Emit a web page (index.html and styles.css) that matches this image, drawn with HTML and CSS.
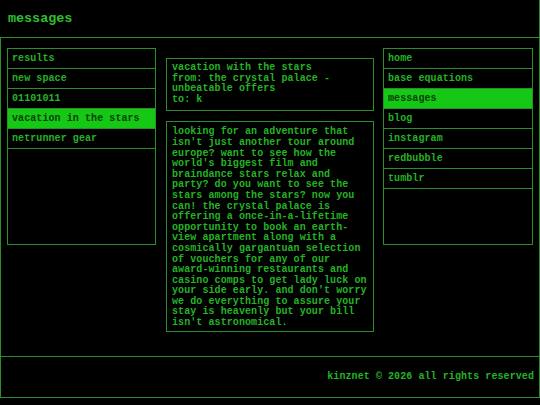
FILE: index.html
```html
<!DOCTYPE html>
<html lang="en">

<head>
    <meta charset="UTF-8">
    <meta name="viewport" content="width=device-width, initial-scale=1.0">
    <title>messages</title>
    <link rel="stylesheet" href="styles.css">
</head>

<body>
    <div class="header">messages</div>
    <div class="page">
        <div class="main">
            <div class="side">
                <a class="item" href="#">results</a>
                <a class="item" href="#">new space</a>
                <a class="item" href="#">01101011</a>
                <a class="item active" href="#">vacation in the stars</a>
                <a class="item" href="#">netrunner gear</a>
            </div>
            <div class="middle">
                <div class="box msg-head">
                    vacation with the stars
                    <br>from: the crystal palace - unbeatable offers
                    <br>to: k
                </div>
                <div class="box msg-body">
                    looking for an adventure that isn't just another tour around europe? want to see how the
                    world's biggest film and braindance stars relax and party? do you want to see the stars
                    among the stars? now you can! the crystal palace is offering a once-in-a-lifetime
                    opportunity to book an earth-view apartment along with a cosmically gargantuan selection
                    of vouchers for any of our award-winning restaurants and casino comps to get lady luck on
                    your side early. and don't worry we do everything to assure your stay is heavenly but your
                    bill isn't astronomical.
                </div>
            </div>
            <div class="side nav">
                <a class="item" href="#">home</a>
                <a class="item" href="#">base equations</a>
                <a class="item active" href="#">messages</a>
                <a class="item" href="#">blog</a>
                <a class="item" href="#">instagram</a>
                <a class="item" href="#">redbubble</a>
                <a class="item" href="#">tumblr</a>
            </div>
        </div>
        <footer>kinznet &copy; 2026 all rights reserved</footer>
    </div>
</body>

</html>
```

FILE: styles.css
```css
body {
    font-family: "Liberation Mono", "DejaVu Sans Mono", monospace;
    font-weight: bold;
    font-size: 10px;
    background-color: #000000;
    color: #25b325;
    margin: 0;
    padding: 0;
}

.header {
    height: 37px;
    line-height: 37px;
    padding-left: 8px;
    font-size: 13.4px;
    color: #2fbf2f;
    border-bottom: 1px solid #2a8f2a;
    border-right: 1px solid #2a8f2a;
}

.page {
    border: 1px solid #2a8f2a;
    border-top: none;
}

.main {
    display: grid;
    grid-template-columns: 149px 208px 149px;
    column-gap: 10px;
    align-items: start;
    height: 308px;
    padding: 10px 0 0 6px;
}

.side {
    height: 195px;
    border: 1px solid #2a8f2a;
    display: flex;
    flex-direction: column;
}

.nav {
    margin-left: -1px; /* right menu sits one pixel closer */
}

.item {
    display: block;
    height: 19px;
    line-height: 19px;
    padding-left: 4px;
    color: #25b325;
    text-decoration: none;
    letter-spacing: 0.08px;
    border-bottom: 1px solid #2a8f2a;
}

.item.active {
    background-color: #16c816;
    color: #064006;
}

.middle {
    margin-top: 10px;
    display: flex;
    flex-direction: column;
    gap: 10px;
}

.box {
    border: 1px solid #2a8f2a;
    line-height: 10.6px;
    letter-spacing: 0.08px;
}

.msg-head {
    padding: 4px 5px 5px 5px;
}

.msg-body {
    padding: 5px 4px 2px 5px;
}

footer {
    border-top: 1px solid #2a8f2a;
    height: 40px;
    line-height: 40px;
    text-align: right;
    padding-right: 5px;
    letter-spacing: 0.08px;
}
```
